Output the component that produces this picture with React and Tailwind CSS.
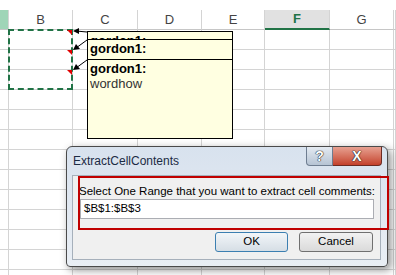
const columns = [
  { name: "", w: "w-[9px]", selected: false, tint: true },
  { name: "B", w: "w-[64px]" },
  { name: "C", w: "w-[65px]" },
  { name: "D", w: "w-[64px]" },
  { name: "E", w: "w-[63px]" },
  { name: "F", w: "w-[65px]", selected: true },
  { name: "G", w: "w-[64px]" },
  { name: "", w: "flex-1" },
]

const rows = Array.from({ length: 13 }, (_, i) => i)

// stacked comment boxes; the earlier ones are only partly visible
const comments = [
  { top: "top-[31px]", h: "h-[9px]", second: "hello world" },
  { top: "top-[39px]", h: "h-[21px]", second: "luck to you all" },
  { top: "top-[59px]", h: "h-[80px]", second: "wordhow" },
]

function HeaderCell({ col }) {
  if (col.selected) {
    return (
      <div className={`${col.w} h-[20px] shrink-0 bg-[#e1e1e1] border-r border-[#d4d4d4] border-b-2 border-b-[#217346] flex items-center justify-center text-[13px] font-bold text-[#217346]`}>
        {col.name}
      </div>
    )
  }
  return (
    <div
      className={`${col.w} h-[20px] shrink-0 border-r border-[#d4d4d4] border-b border-b-[#c6c6c6] flex items-center justify-center text-[13px] text-[#444] ${
        col.tint ? "bg-[#9fd5b7]" : "bg-white"
      }`}
    >
      {col.name}
    </div>
  )
}

function Sheet() {
  return (
    <div className="flex flex-col">
      <div className="h-[10px] bg-white" />
      <div className="flex">
        {columns.map((col, i) => (
          <HeaderCell key={i} col={col} />
        ))}
      </div>
      {rows.map((r) => (
        <div key={r} className="flex">
          {columns.map((col, i) => (
            <div key={i} className={`${col.w} h-[20px] shrink-0 border-r border-b border-[#d4d4d4] bg-white`} />
          ))}
        </div>
      ))}
    </div>
  )
}

function CommentArrows() {
  return (
    <svg className="absolute left-0 top-0" width="396" height="275">
      {/* red comment markers */}
      <polygon points="67,30 72,30 72,35" fill="#e00000" />
      <polygon points="67,50 72,50 72,55" fill="#e00000" />
      <polygon points="67,70 72,70 72,75" fill="#e00000" />
      {/* arrows */}
      <line x1="87" y1="32" x2="76" y2="31" stroke="#000" strokeWidth="1" />
      <polygon points="73,31 79,28 79,34" fill="#000" />
      <line x1="87" y1="40" x2="76" y2="48" stroke="#000" strokeWidth="1" />
      <polygon points="73,50 76,44 80,49" fill="#000" />
      <line x1="87" y1="60" x2="76" y2="68" stroke="#000" strokeWidth="1" />
      <polygon points="73,70 76,64 80,69" fill="#000" />
    </svg>
  )
}

function Dialog() {
  return (
    <div className="absolute left-[66px] top-[146px] w-[322px] h-[121px] rounded-t-[6px] rounded-b-[4px] border border-[#4a4a4a] bg-gradient-to-b from-[#d8e2ee] to-[#e9eef4] shadow-[3px_3px_8px_rgba(0,0,0,0.45)] flex flex-col">
      <div className="h-[28px] shrink-0 flex items-center pl-[6px] text-[12px] text-[#1b2b44]">
        ExtractCellContents
      </div>
      <div className="absolute top-0 right-[5px] flex h-[19px]">
        <div className="w-[27px] h-full rounded-bl-[4px] border border-t-0 border-[#6e7d90] bg-gradient-to-b from-[#e4eaf1] to-[#b6c4d4] flex items-center justify-center text-[14px] font-bold text-white [text-shadow:0_0_1px_#222,0_0_1px_#222,0_0_1px_#222]">
          ?
        </div>
        <div className="w-[49px] h-full rounded-br-[4px] border border-t-0 border-l-0 border-[#6b2a22] bg-gradient-to-b from-[#e6a091] to-[#c3402b] flex items-center justify-center text-[14px] font-bold text-white [text-shadow:0_0_1px_#222,0_0_1px_#222,0_0_1px_#222]">
          X
        </div>
      </div>
      <div className="ml-[5px] mr-[6px] mb-[6px] flex-1 border border-[#a6b0bb] bg-[#f0f0f0] flex flex-col pl-[6px] pr-[4px]">
        <div className="pt-[8px] whitespace-nowrap text-[11.5px] leading-[14px] text-black">
          Select One Range that you want to extract cell comments:
        </div>
        <div className="mt-[1px] ml-[1px] w-[294px] h-[20px] border border-[#abadb3] bg-white flex items-center pl-[3px] text-[11.5px] text-black">
          $B$1:$B$3
        </div>
        <div className="mt-[13px] flex justify-end gap-[11px] pr-[3px]">
          <div className="w-[73px] h-[20px] rounded-[3px] border border-[#3c7fb1] bg-gradient-to-b from-[#f2f6f9] to-[#d6dee5] flex items-center justify-center text-[11.5px] text-black">
            OK
          </div>
          <div className="w-[74px] h-[20px] rounded-[3px] border border-[#707070] bg-gradient-to-b from-[#f2f2f2] to-[#dadada] flex items-center justify-center text-[11.5px] text-black">
            Cancel
          </div>
        </div>
      </div>
    </div>
  )
}

export default function App() {
  return (
    <div className="relative w-[396px] h-[275px] overflow-hidden bg-white font-['Liberation_Sans',Arial,sans-serif]">
      <Sheet />

      {/* copy selection */}
      <div className="absolute left-[8px] top-[29px] w-[65px] h-[61px] border-2 border-dashed border-[#217346]" />

      {comments.map((c, i) => (
        <div
          key={i}
          className={`absolute left-[87px] ${c.top} ${c.h} w-[146px] overflow-hidden border border-black bg-[#ffffe1] px-[2px] pt-[1px] text-[13px] leading-[15px]`}
        >
          <div className="font-bold text-black">gordon1:</div>
          <div className="text-[#333]">{c.second}</div>
        </div>
      ))}

      <CommentArrows />
      <Dialog />

      {/* highlight box */}
      <div className="absolute left-[78px] top-[176px] w-[311px] h-[54px] border-2 border-[#c00000]" />
    </div>
  )
}
